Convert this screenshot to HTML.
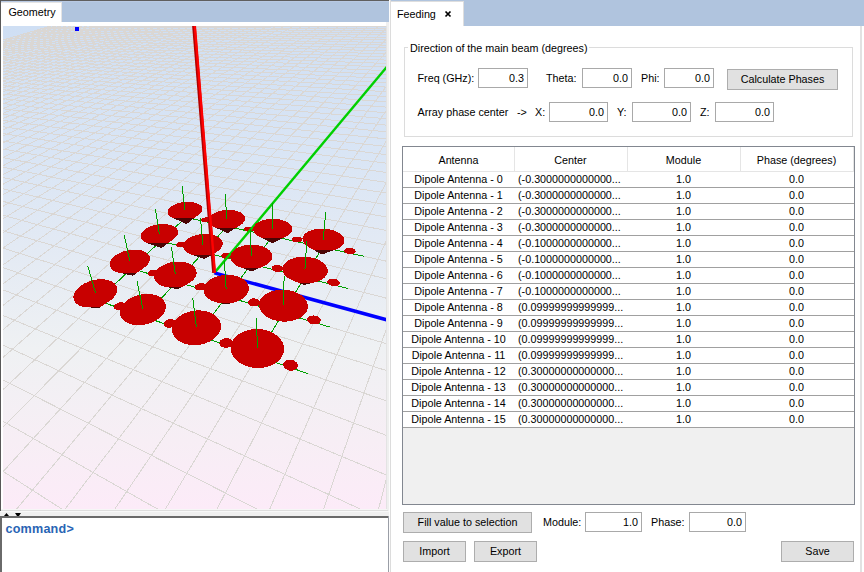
<!DOCTYPE html>
<html><head><meta charset="utf-8"><style>
html,body{margin:0;padding:0;width:864px;height:572px;overflow:hidden;background:#fff}
.b{position:absolute}
.t{position:absolute;font-family:"Liberation Sans", sans-serif;font-size:10.75px;line-height:13px;color:#000;white-space:pre}
</style></head><body>
<div class="b" style="left:0px;top:0px;width:389px;height:1px;background:#5f5f5f"></div>
<div class="b" style="left:1px;top:1px;width:388px;height:25px;background:#b0c4de"></div>
<div class="b" style="left:1px;top:1px;width:388px;height:1px;background:#b8c9e3"></div>
<div class="b" style="left:1px;top:2px;width:61px;height:20px;background:#e4e4e4"></div>
<div class="b" style="left:1px;top:3px;width:60px;height:19px;background:#ffffff"></div>
<div class="b" style="left:1px;top:22px;width:385px;height:4px;background:#ffffff"></div>
<div class="b" style="left:1px;top:26px;width:2px;height:483px;background:#ffffff"></div>
<div class="b" style="left:386px;top:22px;width:3px;height:494px;background:#efefef"></div>
<div class="b" style="left:386px;top:26px;width:1px;height:484px;background:#e3e3e3"></div>
<div class="b" style="left:0px;top:509px;width:389px;height:7px;background:#f0f0f0"></div>
<div class="b" style="left:1px;top:509px;width:386px;height:1px;background:#f6f6f6"></div>
<div class="b" style="left:0px;top:510px;width:388px;height:1px;background:#dedede"></div>
<div class="b" style="left:0px;top:511px;width:389px;height:1px;background:#f8f8f8"></div>
<div class="b" style="left:0px;top:0px;width:1px;height:511px;background:#585858"></div>
<div class="t" style="left:8.5px;top:6px;color:#000">Geometry</div>
<svg width="383" height="483" viewBox="3 26 383 483" style="position:absolute;left:3px;top:26px;display:block">
<defs><linearGradient id="bg" x1="0" y1="0" x2="0" y2="1"><stop offset="0" stop-color="#cfdff4"/><stop offset="0.26" stop-color="#d9e5f5"/><stop offset="0.46" stop-color="#e3eaf4"/><stop offset="0.67" stop-color="#eff1f3"/><stop offset="0.86" stop-color="#f7eef5"/><stop offset="1" stop-color="#fcebf8"/></linearGradient></defs>
<rect x="3" y="26" width="383" height="483" fill="url(#bg)"/>
<path d="M-4964.67 1498.96L82.30 16.73M-5308.28 1617.50L87.16 16.67M-5712.01 1756.79L92.07 16.62M-6193.16 1922.79L97.05 16.56M-6776.35 2123.99L102.09 16.51M-7497.91 2372.93L107.19 16.45M-8413.69 2688.88L112.36 16.39M-9614.32 3103.10L117.60 16.33M-11257.18 3669.89L122.91 16.27M-13641.74 4492.58L128.28 16.21M-17416.73 5794.96L133.73 16.15M-24298.75 8169.28L139.25 16.09M-40806.21 13864.42L144.84 16.02M-51424.45 17701.27L150.51 15.96M-50315.27 17572.27L156.26 15.90M-49206.10 17443.26L162.09 15.83M-48096.92 17314.26L167.99 15.77M-46987.74 17185.26L173.98 15.70M-45878.56 17056.25L180.05 15.63M-44769.39 16927.25L186.21 15.56M-43660.21 16798.25L192.46 15.49M-42551.03 16669.25L198.79 15.42M-41441.86 16540.24L205.22 15.35M-40332.68 16411.24L211.74 15.27M-39223.50 16282.24L218.35 15.20M-38114.32 16153.23L225.06 15.12M-37005.15 16024.23L231.87 15.05M-35895.97 15895.23L238.78 14.97M-34786.79 15766.22L245.80 14.89M-33677.62 15637.22L252.92 14.81M-32568.44 15508.22L260.16 14.73M-31459.26 15379.21L267.50 14.65M-30350.09 15250.21L274.96 14.56M-29240.91 15121.21L282.53 14.48M-28131.73 14992.20L290.23 14.39M-27022.55 14863.20L298.04 14.30M-25913.38 14734.20L305.98 14.22M-24804.20 14605.19L314.05 14.12M-23695.02 14476.19L322.25 14.03M-22585.85 14347.19L330.59 13.94M-21476.67 14218.19L339.06 13.84M-20367.49 14089.18L347.67 13.75M-19258.32 13960.18L356.43 13.65M-18149.14 13831.18L365.34 13.55M-17039.96 13702.17L374.40 13.45M-15930.78 13573.17L383.62 13.34M-14821.61 13444.17L392.99 13.24M-13712.43 13315.16L402.53 13.13M-12603.25 13186.16L412.24 13.02M-11494.08 13057.16L422.13 12.91M-10384.90 12928.15L432.19 12.80M-9275.72 12799.15L442.44 12.68M-8166.54 12670.15L452.87 12.57M-7057.37 12541.14L463.50 12.45M-5948.19 12412.14L474.32 12.33M-4839.01 12283.14L485.35 12.20M-3729.84 12154.14L496.59 12.08M-2620.66 12025.13L508.05 11.95M-1511.48 11896.13L519.73 11.82M-402.31 11767.13L531.64 11.68M706.87 11638.12L543.79 11.55M1816.05 11509.12L556.17 11.41M2925.23 11380.12L568.81 11.26M4034.40 11251.11L581.71 11.12M5143.58 11122.11L594.87 10.97M6252.76 10993.11L608.31 10.82M7361.93 10864.10L622.03 10.67M8471.11 10735.10L636.05 10.51M9580.29 10606.10L650.36 10.35M10689.47 10477.09L664.99 10.18M11798.64 10348.09L679.94 10.02M12907.82 10219.09L695.22 9.84M14017.00 10090.09L710.84 9.67M15126.17 9961.08L726.82 9.49M16235.35 9832.08L743.17 9.31M17344.53 9703.08L759.90 9.12M18453.70 9574.07L777.03 8.93M19562.88 9445.07L794.56 8.73M20672.06 9316.07L812.51 8.53M21781.24 9187.06L830.90 8.32M22890.41 9058.06L849.75 8.11M23999.59 8929.06L869.07 7.89M25108.77 8800.05L888.88 7.67M26217.94 8671.05L909.20 7.44M27327.12 8542.05L930.05 7.21M28436.30 8413.04L951.44 6.97M29545.47 8284.04L973.41 6.72M30654.65 8155.04L995.97 6.47M31763.83 8026.04L1019.15 6.21M32873.01 7897.03L1042.98 5.94M33982.18 7768.03L1067.48 5.66M35091.36 7639.03L1092.68 5.38M36200.54 7510.02L1118.61 5.09M37309.71 7381.02L1145.31 4.79M38418.89 7252.02L1172.80 4.48M39528.07 7123.01L1201.13 4.16M40637.25 6994.01L1230.33 3.84M41746.42 6865.01L1260.44 3.50M42855.60 6736.00L1291.52 3.15M43964.78 6607.00L1323.59 2.79M45073.95 6478.00L1356.72 2.42M-4964.67 1498.96L-52183.17 17789.51M-4419.88 1338.96L-50547.60 17599.29M-3973.17 1207.76L-48912.04 17409.06M-3600.26 1098.24L-47276.47 17218.84M-3284.24 1005.44L-45640.90 17028.61M-3013.03 925.78L-44005.34 16838.39M-2777.72 856.68L-42369.77 16648.16M-2571.62 796.15L-40734.20 16457.94M-2389.62 742.70L-39098.63 16267.71M-2227.73 695.15L-37463.07 16077.49M-2082.77 652.58L-35827.50 15887.26M-1952.24 614.24L-34191.93 15697.04M-1834.07 579.54L-32556.37 15506.81M-1726.60 547.98L-30920.80 15316.59M-1628.43 519.14L-29285.23 15126.36M-1538.40 492.70L-27649.67 14936.14M-1455.54 468.37L-26014.10 14745.91M-1379.03 445.90L-24378.53 14555.69M-1308.16 425.09L-22742.96 14365.46M-1242.34 405.76L-21107.40 14175.24M-1181.04 387.75L-19471.83 13985.01M-1123.81 370.95L-17836.26 13794.79M-1070.26 355.22L-16200.70 13604.56M-1020.05 340.47L-14565.13 13414.34M-972.87 326.62L-12929.56 13224.11M-928.46 313.57L-11294.00 13033.89M-886.57 301.27L-9658.43 12843.66M-847.01 289.65L-8022.86 12653.44M-809.58 278.66L-6387.29 12463.21M-774.11 268.24L-4751.73 12272.99M-740.46 258.36L-3116.16 12082.76M-708.49 248.97L-1480.59 11892.54M-678.07 240.04L154.97 11702.31M-649.09 231.53L1790.54 11512.09M-621.46 223.41L3426.11 11321.86M-595.09 215.67L5061.68 11131.64M-569.88 208.26L6697.24 10941.41M-545.76 201.18L8332.81 10751.19M-522.67 194.40L9968.38 10560.96M-500.54 187.90L11603.94 10370.74M-479.32 181.67L13239.51 10180.51M-458.93 175.68L14875.08 9990.29M-439.35 169.93L16510.64 9800.06M-420.52 164.40L18146.21 9609.84M-402.39 159.08L19781.78 9419.61M-384.94 153.95L21417.35 9229.39M-368.12 149.01L23052.91 9039.16M-351.90 144.25L24688.48 8848.94M-336.25 139.65L26324.05 8658.71M-321.13 135.21L27959.61 8468.49M-306.53 130.92L29595.18 8278.26M-292.42 126.78L31230.75 8088.04M-278.76 122.77L32866.31 7897.81M-265.55 118.89L34501.88 7707.59M-252.75 115.13L36137.45 7517.36M-240.35 111.49L37773.02 7327.14M-228.34 107.96L39408.58 7136.91M-216.69 104.54L41044.15 6946.68M-205.38 101.22L42679.72 6756.46M-194.41 97.99L44315.28 6566.23M-183.75 94.86L26588.98 3739.92M-173.40 91.82L15222.76 2056.31M-163.34 88.87L10762.70 1395.67M-153.56 86.00L8381.14 1042.90M-144.05 83.20L6899.71 823.47M-134.79 80.48L5889.20 673.79M-125.78 77.84L5155.86 565.16M-117.01 75.26L4599.41 482.74M-108.46 72.75L4162.73 418.05M-100.13 70.31L3810.91 365.94M-92.02 67.92L3521.41 323.06M-84.10 65.60L3279.01 287.15M-76.38 63.33L3073.09 256.65M-68.85 61.12L2895.98 230.42M-61.50 58.96L2742.04 207.62M-54.33 56.85L2607.00 187.61M-47.32 54.80L2487.57 169.92M-40.48 52.79L2381.21 154.17M-33.79 50.82L2285.87 140.05M-27.26 48.90L2199.93 127.32M-20.87 47.03L2122.06 115.78M-14.62 45.19L2051.17 105.28M-8.51 43.40L1986.38 95.68M-2.54 41.64L1926.92 86.88M3.31 39.93L1872.16 78.76M9.04 38.24L1821.56 71.27M14.64 36.60L1774.68 64.33M20.13 34.99L1731.11 57.87M25.50 33.41L1690.51 51.86M30.76 31.86L1652.59 46.24M35.92 30.35L1617.10 40.98M40.98 28.86L1583.81 36.05M45.93 27.41L1552.51 31.42M50.79 25.98L1523.04 27.05M55.55 24.58L1495.24 22.93M60.23 23.21L1468.98 19.04M64.81 21.86L1444.12 15.36M69.31 20.54L1420.56 11.87M73.72 19.25L1398.20 8.56M78.05 17.98L1376.95 5.41M82.30 16.73L1356.72 2.42" stroke="#dad7d4" stroke-width="1" fill="none" shape-rendering="crispEdges"/>
<path d="M97.60 300.50L307.78 373.57M131.48 268.58L329.93 327.05M160.55 241.18L348.25 288.58M185.78 217.40L363.65 256.22M97.60 300.50L199.38 204.58M144.51 316.81L239.65 212.66M197.33 335.17L283.73 221.50M257.26 356.01L332.17 231.22" stroke="#00a000" stroke-width="1" fill="none" shape-rendering="crispEdges"/>
<path d="M124.55 307.83L125.32 306.83L125.70 305.80L125.68 304.79L125.27 303.89L124.48 303.15L123.39 302.61L122.06 302.32L120.58 302.30L119.05 302.53L117.57 303.02L116.24 303.72L115.15 304.59L114.37 305.57L113.96 306.60L113.94 307.62L114.33 308.53L115.10 309.30L116.19 309.85L117.54 310.15L119.05 310.19L120.61 309.95L122.12 309.45L123.46 308.73ZM157.51 274.19L158.14 273.34L158.41 272.47L158.32 271.63L157.86 270.87L157.07 270.25L156.01 269.82L154.75 269.59L153.37 269.58L151.96 269.79L150.62 270.21L149.44 270.81L148.49 271.55L147.85 272.39L147.55 273.26L147.62 274.11L148.06 274.87L148.83 275.51L149.90 275.96L151.18 276.20L152.58 276.22L154.02 276.00L155.38 275.56L156.57 274.95ZM185.65 245.47L186.17 244.74L186.36 244.00L186.21 243.28L185.72 242.64L184.94 242.12L183.91 241.76L182.71 241.58L181.42 241.58L180.12 241.77L178.89 242.14L177.83 242.67L177.00 243.31L176.46 244.02L176.25 244.77L176.38 245.49L176.85 246.14L177.63 246.67L178.66 247.04L179.87 247.24L181.19 247.23L182.51 247.04L183.75 246.66L184.82 246.12ZM209.94 220.67L210.39 220.04L210.51 219.39L210.32 218.78L209.82 218.23L209.04 217.79L208.05 217.49L206.91 217.34L205.69 217.35L204.48 217.53L203.36 217.86L202.40 218.32L201.66 218.88L201.21 219.50L201.06 220.14L201.24 220.76L201.72 221.31L202.49 221.76L203.49 222.08L204.64 222.23L205.88 222.22L207.11 222.04L208.25 221.70L209.21 221.23ZM175.06 325.26L175.74 324.16L176.00 323.01L175.84 321.90L175.27 320.89L174.32 320.06L173.07 319.47L171.59 319.14L169.99 319.10L168.38 319.35L166.85 319.88L165.52 320.65L164.46 321.61L163.76 322.70L163.46 323.84L163.59 324.96L164.14 325.98L165.07 326.84L166.33 327.46L167.83 327.80L169.46 327.85L171.11 327.59L172.66 327.04L174.01 326.25ZM205.67 288.26L206.22 287.34L206.39 286.38L206.16 285.45L205.55 284.62L204.62 283.94L203.42 283.45L202.03 283.19L200.55 283.17L199.07 283.40L197.69 283.86L196.51 284.51L195.61 285.32L195.03 286.24L194.84 287.19L195.04 288.12L195.62 288.97L196.54 289.67L197.75 290.17L199.16 290.44L200.67 290.47L202.18 290.23L203.58 289.76L204.77 289.09ZM231.56 256.96L232.02 256.17L232.11 255.36L231.84 254.58L231.22 253.88L230.31 253.31L229.15 252.91L227.84 252.71L226.46 252.70L225.10 252.91L223.85 253.31L222.79 253.87L222.00 254.57L221.53 255.34L221.41 256.15L221.66 256.94L222.26 257.65L223.17 258.23L224.32 258.64L225.65 258.86L227.06 258.86L228.45 258.65L229.72 258.25L230.78 257.67ZM253.76 230.13L254.13 229.45L254.17 228.76L253.87 228.09L253.25 227.50L252.36 227.02L251.25 226.69L250.01 226.52L248.72 226.53L247.46 226.72L246.31 227.07L245.35 227.56L244.66 228.17L244.26 228.83L244.21 229.53L244.49 230.20L245.09 230.80L245.98 231.29L247.09 231.63L248.34 231.81L249.66 231.80L250.94 231.61L252.11 231.25L253.06 230.74ZM232.21 344.99L232.78 343.76L232.89 342.48L232.55 341.23L231.77 340.10L230.62 339.17L229.17 338.50L227.53 338.12L225.79 338.07L224.08 338.34L222.51 338.92L221.18 339.77L220.18 340.84L219.59 342.05L219.43 343.33L219.74 344.58L220.49 345.73L221.63 346.69L223.08 347.39L224.76 347.78L226.53 347.84L228.28 347.56L229.88 346.96L231.22 346.08ZM259.60 304.02L260.05 303.00L260.08 301.94L259.69 300.92L258.91 300.00L257.80 299.24L256.43 298.70L254.89 298.40L253.29 298.38L251.74 298.62L250.33 299.12L249.15 299.83L248.30 300.72L247.83 301.73L247.76 302.78L248.12 303.81L248.88 304.75L249.98 305.53L251.36 306.09L252.92 306.40L254.56 306.43L256.14 306.18L257.58 305.67L258.76 304.94ZM282.54 269.71L282.90 268.85L282.87 267.97L282.46 267.11L281.68 266.34L280.61 265.72L279.31 265.28L277.87 265.04L276.39 265.04L274.96 265.26L273.68 265.68L272.64 266.30L271.90 267.05L271.52 267.90L271.52 268.79L271.91 269.65L272.66 270.42L273.73 271.07L275.03 271.53L276.50 271.77L278.01 271.78L279.46 271.56L280.76 271.12L281.81 270.49ZM302.03 240.56L302.33 239.83L302.25 239.07L301.82 238.35L301.07 237.70L300.04 237.18L298.80 236.82L297.45 236.63L296.07 236.64L294.75 236.84L293.58 237.21L292.64 237.74L291.99 238.39L291.68 239.12L291.72 239.87L292.13 240.60L292.87 241.25L293.90 241.79L295.14 242.17L296.51 242.36L297.92 242.36L299.26 242.15L300.45 241.77L301.39 241.22ZM297.41 367.49L297.83 366.11L297.74 364.66L297.16 363.26L296.13 361.99L294.73 360.93L293.04 360.17L291.19 359.73L289.30 359.66L287.48 359.96L285.87 360.60L284.56 361.55L283.64 362.74L283.19 364.10L283.23 365.53L283.76 366.95L284.76 368.25L286.16 369.33L287.86 370.14L289.75 370.59L291.69 370.67L293.55 370.37L295.19 369.70L296.51 368.72ZM320.41 321.80L320.73 320.66L320.59 319.49L320.00 318.34L319.00 317.32L317.67 316.47L316.10 315.86L314.39 315.52L312.65 315.49L311.01 315.75L309.56 316.29L308.41 317.08L307.64 318.06L307.29 319.18L307.39 320.35L307.95 321.50L308.92 322.54L310.25 323.42L311.83 324.05L313.58 324.40L315.35 324.45L317.03 324.18L318.50 323.62L319.65 322.81ZM339.46 283.96L339.71 283.01L339.53 282.04L338.93 281.09L337.97 280.25L336.71 279.56L335.24 279.06L333.65 278.80L332.05 278.79L330.55 279.02L329.25 279.48L328.22 280.15L327.55 280.98L327.28 281.91L327.43 282.88L327.99 283.83L328.93 284.69L330.19 285.40L331.68 285.91L333.29 286.19L334.92 286.21L336.45 285.97L337.78 285.49L338.81 284.80ZM355.50 252.11L355.69 251.31L355.48 250.49L354.89 249.70L353.97 248.99L352.78 248.42L351.39 248.02L349.91 247.81L348.43 247.81L347.05 248.02L345.86 248.43L344.94 249.00L344.35 249.70L344.14 250.49L344.31 251.31L344.87 252.11L345.78 252.83L346.97 253.41L348.37 253.83L349.87 254.05L351.38 254.05L352.79 253.84L354.00 253.42L354.92 252.83Z" fill="#c80000" shape-rendering="crispEdges"/>
<path d="M214.38 272.86L445.07 -2.59" stroke="#00d000" stroke-width="2.4" fill="none"/>
<path d="M214.38 272.86L4019.67 1309.69" stroke="#0000ff" stroke-width="3.5" fill="none"/>
<path d="M167.58 212.53L167.59 211.77L167.72 211.01L167.99 210.25L168.38 209.49L168.90 208.74L169.53 208.00L170.27 207.29L171.12 206.60L172.08 205.95L173.12 205.33L174.25 204.75L175.45 204.21L176.72 203.72L178.05 203.28L179.43 202.89L180.85 202.56L182.29 202.29L183.76 202.08L185.23 201.93L186.71 201.84L188.17 201.82L189.61 201.85L191.01 201.95L192.38 202.12L193.69 202.34L194.94 202.63L196.12 202.97L197.23 203.38L198.24 203.83L199.16 204.34L199.98 204.89L200.69 205.49L201.28 206.13L201.75 206.80L202.10 207.50L202.32 208.23L202.41 208.98L202.36 209.75L202.18 210.52L201.87 211.29L201.43 212.07L200.85 212.83L200.15 213.58L199.33 214.31L186.56 224.03L172.20 217.67L171.20 217.17L170.31 216.62L169.54 216.02L168.89 215.38L168.37 214.71L167.97 214.00L167.71 213.28Z" fill="#c80000" shape-rendering="crispEdges"/>
<path d="M194.36 218.10L186.56 224.03L173.16 218.10Z" fill="#4a0404" shape-rendering="crispEdges"/>
<path d="M184.96 210.38L182.10 186.03" stroke="#00a000" stroke-width="1" fill="none" shape-rendering="crispEdges"/>
<path d="M208.39 220.60L208.42 219.78L208.59 218.95L208.89 218.13L209.33 217.33L209.89 216.54L210.58 215.77L211.38 215.04L212.30 214.33L213.32 213.67L214.43 213.05L215.63 212.47L216.91 211.95L218.26 211.48L219.66 211.07L221.12 210.72L222.62 210.43L224.14 210.21L225.69 210.05L227.24 209.96L228.79 209.94L230.33 209.99L231.84 210.10L233.32 210.28L234.75 210.53L236.13 210.84L237.44 211.22L238.67 211.65L239.82 212.15L240.88 212.70L241.84 213.30L242.68 213.94L243.41 214.63L244.02 215.36L244.50 216.12L244.85 216.91L245.06 217.72L245.13 218.54L245.06 219.38L244.84 220.21L244.49 221.05L244.00 221.87L243.37 222.68L242.61 223.46L241.72 224.21L240.71 224.93L227.47 233.26L214.18 226.99L213.04 226.44L212.01 225.84L211.10 225.19L210.32 224.50L209.66 223.77L209.13 223.01L208.75 222.23L208.50 221.42Z" fill="#c80000" shape-rendering="crispEdges"/>
<path d="M236.33 227.68L227.47 233.26L215.65 227.68Z" fill="#4a0404" shape-rendering="crispEdges"/>
<path d="M226.68 219.16L225.27 193.95" stroke="#00a000" stroke-width="1" fill="none" shape-rendering="crispEdges"/>
<path d="M140.75 236.24L140.83 235.36L141.05 234.48L141.41 233.59L141.90 232.72L142.52 231.85L143.26 231.01L144.12 230.19L145.09 229.41L146.16 228.66L147.33 227.95L148.58 227.29L149.91 226.69L151.30 226.13L152.75 225.64L154.25 225.21L155.78 224.84L157.34 224.54L158.91 224.31L160.48 224.15L162.05 224.06L163.60 224.05L165.11 224.10L166.59 224.23L168.02 224.44L169.39 224.71L170.69 225.05L171.91 225.46L173.04 225.94L174.08 226.47L175.01 227.07L175.82 227.72L176.52 228.42L177.09 229.16L177.53 229.94L177.84 230.76L178.00 231.61L178.03 232.48L177.91 233.37L177.65 234.26L177.25 235.16L176.70 236.05L176.03 236.93L175.21 237.79L174.28 238.63L173.22 239.43L161.65 248.02L147.49 243.25L146.26 242.79L145.13 242.26L144.12 241.66L143.23 241.01L142.47 240.31L141.85 239.56L141.36 238.77L141.02 237.95L140.81 237.11Z" fill="#c80000" shape-rendering="crispEdges"/>
<path d="M167.91 243.37L161.65 248.02L147.85 243.37Z" fill="#4a0404" shape-rendering="crispEdges"/>
<path d="M159.39 233.92L155.32 208.68" stroke="#00a000" stroke-width="1" fill="none" shape-rendering="crispEdges"/>
<path d="M253.16 229.42L253.21 228.52L253.40 227.64L253.74 226.77L254.22 225.91L254.83 225.09L255.57 224.29L256.44 223.54L257.42 222.82L258.51 222.16L259.70 221.54L260.98 220.98L262.35 220.48L263.78 220.04L265.28 219.67L266.83 219.36L268.43 219.12L270.05 218.96L271.69 218.87L273.34 218.85L274.99 218.91L276.62 219.03L278.22 219.24L279.79 219.51L281.31 219.85L282.77 220.26L284.16 220.74L285.47 221.28L286.69 221.87L287.81 222.53L288.82 223.23L289.71 223.98L290.48 224.77L291.11 225.59L291.61 226.45L291.97 227.33L292.18 228.22L292.24 229.12L292.15 230.03L291.91 230.93L291.51 231.82L290.97 232.70L290.29 233.54L289.46 234.36L288.49 235.13L287.40 235.86L286.19 236.53L272.37 243.39L259.15 236.66L257.95 236.01L256.87 235.30L255.92 234.55L255.11 233.75L254.43 232.92L253.89 232.07L253.50 231.20L253.25 230.31Z" fill="#c80000" shape-rendering="crispEdges"/>
<path d="M282.67 238.28L272.37 243.39L262.32 238.28Z" fill="#4a0404" shape-rendering="crispEdges"/>
<path d="M272.57 228.82L272.91 202.68" stroke="#00a000" stroke-width="1" fill="none" shape-rendering="crispEdges"/>
<path d="M302.47 239.09L302.53 238.13L302.75 237.18L303.12 236.26L303.64 235.36L304.30 234.50L305.10 233.68L306.03 232.91L307.09 232.19L308.26 231.53L309.54 230.92L310.92 230.39L312.38 229.92L313.92 229.52L315.53 229.19L317.20 228.94L318.91 228.77L320.65 228.68L322.41 228.67L324.18 228.73L325.95 228.88L327.70 229.10L329.43 229.40L331.11 229.78L332.75 230.23L334.32 230.76L335.81 231.35L337.22 232.00L338.53 232.71L339.73 233.48L340.82 234.30L341.78 235.16L342.60 236.06L343.28 236.99L343.82 237.95L344.20 238.92L344.42 239.90L344.48 240.89L344.37 241.87L344.10 242.84L343.67 243.79L343.08 244.71L342.33 245.59L341.43 246.43L340.38 247.22L339.19 247.95L337.88 248.62L336.45 249.21L321.87 254.56L308.80 247.26L307.52 246.48L306.38 245.66L305.37 244.79L304.50 243.88L303.79 242.95L303.22 242.00L302.81 241.03L302.56 240.06Z" fill="#c80000" shape-rendering="crispEdges"/>
<path d="M334.20 250.04L321.87 254.56L313.77 250.04Z" fill="#4a0404" shape-rendering="crispEdges"/>
<path d="M323.26 239.49L325.76 212.37" stroke="#00a000" stroke-width="1" fill="none" shape-rendering="crispEdges"/>
<path d="M183.34 246.05L183.44 245.09L183.70 244.13L184.09 243.18L184.63 242.25L185.30 241.34L186.10 240.45L187.02 239.60L188.05 238.80L189.19 238.03L190.43 237.32L191.76 236.67L193.16 236.07L194.64 235.54L196.17 235.08L197.75 234.69L199.36 234.37L201.00 234.13L202.66 233.96L204.32 233.87L205.97 233.86L207.60 233.93L209.19 234.08L210.75 234.30L212.25 234.61L213.69 234.98L215.06 235.43L216.33 235.95L217.52 236.54L218.60 237.19L219.57 237.89L220.42 238.66L221.14 239.47L221.73 240.32L222.18 241.21L222.49 242.13L222.65 243.08L222.66 244.04L222.51 245.01L222.22 245.99L221.78 246.96L221.18 247.91L220.45 248.85L219.57 249.75L218.56 250.62L217.42 251.45L216.17 252.23L204.33 259.12L191.61 254.68L190.22 254.17L188.94 253.58L187.77 252.93L186.73 252.22L185.81 251.45L185.04 250.63L184.40 249.77L183.91 248.87L183.57 247.95L183.38 247.01Z" fill="#c80000" shape-rendering="crispEdges"/>
<path d="M211.27 255.08L204.33 259.12L192.76 255.08Z" fill="#4a0404" shape-rendering="crispEdges"/>
<path d="M202.94 244.57L200.45 218.42" stroke="#00a000" stroke-width="1" fill="none" shape-rendering="crispEdges"/>
<path d="M109.75 264.63L109.78 263.61L109.96 262.58L110.29 261.55L110.76 260.52L111.38 259.49L112.13 258.49L113.01 257.51L114.01 256.57L115.13 255.66L116.35 254.79L117.66 253.98L119.06 253.22L120.54 252.53L122.08 251.90L123.67 251.34L125.30 250.85L126.97 250.43L128.65 250.10L130.35 249.85L132.03 249.68L133.71 249.59L135.36 249.59L136.97 249.68L138.52 249.85L140.02 250.10L141.45 250.43L142.80 250.85L144.06 251.34L145.21 251.90L146.26 252.54L147.19 253.25L147.99 254.01L148.67 254.84L149.20 255.72L149.59 256.64L149.84 257.60L149.93 258.59L149.87 259.61L149.66 260.65L149.29 261.70L148.78 262.75L148.11 263.79L147.30 264.81L146.35 265.82L145.26 266.79L144.05 267.72L132.99 275.62L119.06 272.80L117.58 272.41L116.21 271.93L114.94 271.37L113.80 270.73L112.78 270.02L111.90 269.24L111.17 268.41L110.59 267.52L110.15 266.59L109.87 265.62Z" fill="#c80000" shape-rendering="crispEdges"/>
<path d="M136.98 272.77L132.99 275.62L119.06 272.80L118.97 272.77Z" fill="#4a0404" shape-rendering="crispEdges"/>
<path d="M129.86 261.10L124.23 234.97" stroke="#00a000" stroke-width="1" fill="none" shape-rendering="crispEdges"/>
<path d="M230.37 256.85L230.50 255.80L230.77 254.76L231.20 253.75L231.78 252.75L232.50 251.79L233.35 250.87L234.34 250.00L235.44 249.17L236.66 248.40L237.97 247.69L239.39 247.05L240.88 246.48L242.45 245.99L244.08 245.57L245.76 245.23L247.47 244.97L249.22 244.79L250.98 244.70L252.74 244.70L254.50 244.78L256.23 244.95L257.93 245.20L259.59 245.54L261.19 245.95L262.72 246.45L264.18 247.02L265.54 247.66L266.80 248.37L267.95 249.15L268.98 249.98L269.89 250.87L270.66 251.80L271.28 252.78L271.76 253.79L272.08 254.82L272.25 255.87L272.25 256.93L272.09 258.00L271.77 259.05L271.29 260.10L270.65 261.12L269.85 262.10L268.91 263.05L267.82 263.95L266.60 264.80L265.25 265.58L263.78 266.29L251.49 271.40L239.04 266.80L237.58 266.15L236.22 265.43L234.99 264.65L233.89 263.80L232.93 262.90L232.12 261.96L231.46 260.98L230.95 259.97L230.60 258.94L230.41 257.90Z" fill="#c80000" shape-rendering="crispEdges"/>
<path d="M259.38 268.12L251.49 271.40L242.63 268.12Z" fill="#4a0404" shape-rendering="crispEdges"/>
<path d="M251.19 256.36L250.64 229.25" stroke="#00a000" stroke-width="1" fill="none" shape-rendering="crispEdges"/>
<path d="M154.17 276.77L154.21 275.64L154.42 274.51L154.79 273.38L155.30 272.26L155.97 271.17L156.77 270.10L157.71 269.07L158.77 268.08L159.96 267.14L161.25 266.26L162.64 265.44L164.12 264.68L165.67 264.00L167.30 263.39L168.98 262.87L170.70 262.42L172.45 262.07L174.23 261.80L176.01 261.62L177.79 261.54L179.55 261.54L181.29 261.64L182.98 261.83L184.62 262.12L186.20 262.49L187.71 262.95L189.12 263.49L190.44 264.12L191.66 264.82L192.76 265.59L193.73 266.44L194.58 267.34L195.28 268.30L195.84 269.32L196.24 270.37L196.49 271.46L196.58 272.58L196.50 273.72L196.27 274.86L195.87 276.01L195.31 277.15L194.59 278.27L193.71 279.37L192.69 280.44L191.53 281.45L190.24 282.42L188.82 283.33L187.29 284.16L177.52 289.10L167.16 287.25L165.44 286.91L163.79 286.47L162.24 285.94L160.80 285.32L159.49 284.61L158.30 283.82L157.25 282.96L156.34 282.04L155.59 281.07L154.99 280.04L154.55 278.98L154.28 277.89Z" fill="#c80000" shape-rendering="crispEdges"/>
<path d="M181.27 287.21L177.52 289.10L167.16 287.25L166.94 287.21Z" fill="#4a0404" shape-rendering="crispEdges"/>
<path d="M175.34 274.11L171.40 247.05" stroke="#00a000" stroke-width="1" fill="none" shape-rendering="crispEdges"/>
<path d="M282.57 268.78L282.70 267.65L283.00 266.53L283.46 265.45L284.07 264.40L284.84 263.39L285.75 262.44L286.80 261.54L287.98 260.70L289.28 259.93L290.69 259.24L292.21 258.62L293.81 258.09L295.49 257.63L297.23 257.27L299.04 256.99L300.88 256.81L302.76 256.72L304.65 256.73L306.55 256.82L308.44 257.01L310.31 257.30L312.15 257.67L313.94 258.13L315.67 258.68L317.33 259.31L318.90 260.03L320.38 260.81L321.75 261.67L323.00 262.58L324.12 263.56L325.11 264.59L325.95 265.66L326.63 266.76L327.15 267.90L327.51 269.05L327.70 270.22L327.71 271.39L327.54 272.55L327.20 273.69L326.68 274.81L325.99 275.89L325.14 276.93L324.12 277.92L322.94 278.84L321.62 279.70L320.16 280.47L318.58 281.17L316.88 281.77L315.09 282.27L303.88 285.03L293.57 280.91L291.89 280.19L290.31 279.39L288.85 278.52L287.53 277.59L286.35 276.59L285.32 275.55L284.45 274.47L283.74 273.36L283.19 272.23L282.81 271.08L282.61 269.93Z" fill="#c80000" shape-rendering="crispEdges"/>
<path d="M313.23 282.73L303.88 285.03L298.13 282.73Z" fill="#4a0404" shape-rendering="crispEdges"/>
<path d="M304.92 269.49L306.80 241.37" stroke="#00a000" stroke-width="1" fill="none" shape-rendering="crispEdges"/>
<path d="M73.47 296.77L73.62 295.56L73.93 294.34L74.41 293.12L75.04 291.90L75.82 290.69L76.74 289.51L77.79 288.36L78.98 287.26L80.27 286.19L81.67 285.19L83.17 284.24L84.75 283.36L86.41 282.56L88.12 281.83L89.89 281.18L91.69 280.63L93.51 280.16L95.35 279.78L97.18 279.51L99.01 279.33L100.80 279.25L102.56 279.26L104.27 279.38L105.92 279.60L107.49 279.91L108.98 280.32L110.38 280.83L111.67 281.43L112.84 282.11L113.89 282.88L114.81 283.72L115.59 284.64L116.22 285.62L116.70 286.67L117.02 287.76L117.18 288.91L117.17 290.09L117.00 291.30L116.66 292.53L116.15 293.77L115.49 295.01L114.66 296.24L113.68 297.45L112.55 298.63L111.28 299.78L109.88 300.87L108.36 301.91L99.66 307.73L87.70 307.42L85.88 307.26L84.14 306.99L82.49 306.62L80.95 306.13L79.53 305.54L78.24 304.86L77.08 304.08L76.08 303.22L75.23 302.29L74.54 301.28L74.02 300.22L73.67 299.11L73.48 297.95Z" fill="#c80000" shape-rendering="crispEdges"/>
<path d="M100.19 307.37L99.66 307.73L87.70 307.42L87.21 307.37Z" fill="#4a0404" shape-rendering="crispEdges"/>
<path d="M95.41 292.82L87.70 265.85" stroke="#00a000" stroke-width="1" fill="none" shape-rendering="crispEdges"/>
<path d="M203.63 290.22L203.68 288.98L203.91 287.73L204.29 286.51L204.84 285.30L205.55 284.13L206.40 283.00L207.40 281.92L208.53 280.89L209.78 279.93L211.15 279.03L212.62 278.21L214.19 277.47L215.85 276.81L217.57 276.24L219.35 275.76L221.18 275.38L223.05 275.10L224.94 274.91L226.83 274.82L228.73 274.84L230.61 274.96L232.46 275.18L234.26 275.49L236.02 275.91L237.70 276.42L239.31 277.02L240.83 277.72L242.25 278.50L243.55 279.35L244.73 280.29L245.78 281.29L246.69 282.35L247.45 283.47L248.05 284.63L248.48 285.83L248.76 287.06L248.85 288.32L248.78 289.58L248.53 290.84L248.11 292.10L247.51 293.34L246.74 294.55L245.81 295.72L244.72 296.84L243.47 297.90L242.09 298.89L240.57 299.81L238.93 300.64L237.19 301.38L235.36 302.02L233.45 302.56L227.11 304.11L221.31 303.39L219.34 303.12L217.42 302.73L215.58 302.24L213.83 301.64L212.19 300.94L210.66 300.15L209.26 299.28L207.99 298.32L206.88 297.30L205.92 296.22L205.13 295.08L204.50 293.91L204.04 292.70L203.75 291.47Z" fill="#c80000" shape-rendering="crispEdges"/>
<path d="M229.91 303.42L227.11 304.11L221.59 303.42Z" fill="#4a0404" shape-rendering="crispEdges"/>
<path d="M226.13 288.65L224.35 260.61" stroke="#00a000" stroke-width="1" fill="none" shape-rendering="crispEdges"/>
<path d="M119.77 311.81L119.94 310.46L120.29 309.10L120.80 307.76L121.47 306.43L122.30 305.13L123.28 303.87L124.40 302.65L125.65 301.48L127.02 300.38L128.49 299.34L130.07 298.38L131.74 297.50L133.48 296.70L135.29 296.00L137.14 295.40L139.04 294.89L140.96 294.49L142.89 294.19L144.82 294.00L146.74 293.92L148.63 293.95L150.48 294.09L152.28 294.34L154.02 294.69L155.68 295.15L157.25 295.72L158.72 296.38L160.08 297.14L161.32 298.00L162.43 298.93L163.40 299.95L164.22 301.04L164.88 302.20L165.38 303.42L165.72 304.68L165.88 305.99L165.87 307.33L165.68 308.69L165.32 310.06L164.78 311.43L164.06 312.79L163.18 314.13L162.13 315.43L160.93 316.70L159.57 317.91L158.08 319.05L156.47 320.12L154.73 321.11L152.90 322.00L150.98 322.80L148.99 323.48L146.95 324.05L144.88 324.50L142.79 324.83L140.69 325.03L138.62 325.11L136.58 325.05L134.59 324.87L132.68 324.56L130.85 324.13L129.12 323.58L127.50 322.92L126.01 322.15L124.67 321.28L123.47 320.32L122.43 319.28L121.55 318.16L120.84 316.98L120.31 315.74L119.95 314.46L119.77 313.15Z" fill="#c80000" shape-rendering="crispEdges"/>
<path d="M142.84 308.90L136.96 281.01" stroke="#00a000" stroke-width="1" fill="none" shape-rendering="crispEdges"/>
<path d="M213.98 272.86L-1388.05 -19467.11" stroke="#b00000" stroke-width="3.6" fill="none"/>
<path d="M214.88 272.86L-1387.15 -19467.11" stroke="#ff0000" stroke-width="2.4" fill="none"/>
<path d="M259.02 305.23L259.06 303.85L259.29 302.50L259.69 301.17L260.26 299.87L261.00 298.63L261.90 297.44L262.96 296.31L264.16 295.25L265.49 294.26L266.95 293.36L268.52 292.55L270.20 291.83L271.96 291.21L273.81 290.69L275.72 290.28L277.69 289.98L279.69 289.78L281.73 289.70L283.77 289.72L285.82 289.86L287.85 290.11L289.85 290.47L291.81 290.94L293.72 291.51L295.55 292.19L297.31 292.96L298.97 293.83L300.52 294.79L301.95 295.82L303.25 296.94L304.41 298.12L305.41 299.36L306.26 300.65L306.93 301.99L307.43 303.35L307.75 304.74L307.88 306.14L307.82 307.55L307.58 308.94L307.14 310.31L306.51 311.65L305.69 312.94L304.70 314.18L303.53 315.36L302.19 316.46L300.70 317.47L299.07 318.39L297.30 319.20L295.42 319.91L293.44 320.49L291.37 320.96L289.24 321.30L287.06 321.51L284.85 321.58L282.63 321.53L280.42 321.35L278.24 321.03L276.10 320.59L274.03 320.03L272.04 319.36L270.14 318.57L268.36 317.68L266.70 316.70L265.18 315.63L263.81 314.49L262.60 313.28L261.56 312.01L260.69 310.70L260.00 309.36L259.49 307.99L259.16 306.61Z" fill="#c80000" shape-rendering="crispEdges"/>
<path d="M283.23 304.99L284.20 275.95" stroke="#00a000" stroke-width="1" fill="none" shape-rendering="crispEdges"/>
<path d="M171.82 328.63L171.99 327.13L172.35 325.63L172.89 324.16L173.59 322.71L174.47 321.31L175.50 319.96L176.67 318.67L177.99 317.45L179.43 316.31L180.99 315.25L182.66 314.28L184.43 313.41L186.27 312.64L188.18 311.98L190.15 311.43L192.16 310.99L194.20 310.67L196.26 310.48L198.32 310.40L200.36 310.44L202.38 310.60L204.36 310.89L206.29 311.29L208.15 311.81L209.93 312.45L211.62 313.20L213.20 314.05L214.67 315.00L216.01 316.05L217.21 317.19L218.27 318.41L219.16 319.70L219.89 321.05L220.45 322.46L220.82 323.92L221.02 325.41L221.02 326.93L220.84 328.45L220.46 329.98L219.90 331.49L219.15 332.98L218.21 334.44L217.10 335.84L215.82 337.19L214.38 338.46L212.79 339.65L211.06 340.74L209.21 341.73L207.25 342.61L205.20 343.36L203.08 343.99L200.89 344.48L198.67 344.84L196.43 345.05L194.19 345.12L191.98 345.05L189.80 344.83L187.67 344.47L185.63 343.98L183.67 343.35L181.82 342.60L180.10 341.73L178.51 340.75L177.07 339.67L175.79 338.49L174.68 337.24L173.74 335.91L172.98 334.53L172.41 333.10L172.03 331.63L171.83 330.14Z" fill="#c80000" shape-rendering="crispEdges"/>
<path d="M196.34 327.03L192.84 298.20" stroke="#00a000" stroke-width="1" fill="none" shape-rendering="crispEdges"/>
<path d="M230.72 347.59L230.87 345.92L231.23 344.27L231.77 342.65L232.50 341.09L233.40 339.58L234.48 338.15L235.71 336.79L237.10 335.52L238.63 334.35L240.28 333.27L242.06 332.31L243.93 331.46L245.90 330.74L247.95 330.13L250.06 329.66L252.22 329.31L254.42 329.10L256.64 329.03L258.86 329.09L261.08 329.28L263.27 329.61L265.42 330.08L267.52 330.67L269.56 331.39L271.51 332.23L273.37 333.20L275.12 334.27L276.75 335.45L278.24 336.73L279.58 338.10L280.76 339.56L281.78 341.08L282.62 342.66L283.27 344.30L283.72 345.98L283.98 347.68L284.03 349.39L283.87 351.10L283.51 352.80L282.94 354.48L282.16 356.11L281.18 357.68L280.01 359.19L278.65 360.61L277.11 361.94L275.40 363.16L273.55 364.27L271.55 365.24L269.44 366.08L267.22 366.78L264.93 367.32L262.56 367.70L260.15 367.93L257.72 367.99L255.29 367.90L252.88 367.64L250.51 367.22L248.20 366.65L245.97 365.93L243.84 365.07L241.82 364.07L239.94 362.96L238.20 361.73L236.63 360.40L235.22 358.98L233.99 357.48L232.95 355.91L232.10 354.30L231.46 352.65L231.01 350.97L230.76 349.28Z" fill="#c80000" shape-rendering="crispEdges"/>
<path d="M257.16 347.63L256.78 317.87" stroke="#00a000" stroke-width="1" fill="none" shape-rendering="crispEdges"/>
<rect x="75" y="27" width="4" height="4" fill="#0000ff"/>
</svg>
<svg style="position:absolute;left:0;top:510px" width="30" height="8"><path d="M4 6L6.5 3L9 6Z" fill="#000"/><path d="M15 3L21 3L19 6L17 6Z" fill="#000"/></svg>
<div class="b" style="left:0px;top:516px;width:389px;height:56px;background:#fff"></div>
<div class="b" style="left:0px;top:516px;width:389px;height:2px;background:#6a6a6a"></div>
<div class="b" style="left:0px;top:516px;width:2px;height:56px;background:#6a6a6a"></div>
<div class="b" style="left:388px;top:516px;width:2px;height:56px;background:#9a9ea6"></div>
<div class="t" style="left:5.5px;top:521.6px;font-size:12.6px;font-weight:bold;color:#2964b4;line-height:15px;letter-spacing:0.2px">command&gt;</div>
<div class="b" style="left:389px;top:0px;width:2px;height:572px;background:#f4f4f4"></div>
<div class="b" style="left:390px;top:26px;width:1px;height:546px;background:#d4d4d4"></div>
<div class="b" style="left:391px;top:0px;width:473px;height:572px;background:#fff"></div>
<div class="b" style="left:391px;top:0px;width:473px;height:26px;background:#b0c4de"></div>
<div class="b" style="left:391px;top:1px;width:73px;height:25px;background:#dedede"></div>
<div class="b" style="left:391px;top:2px;width:72px;height:24px;background:#fff"></div>
<div class="b" style="left:389px;top:0px;width:1px;height:572px;background:#fcfcfc"></div>
<div class="b" style="left:390px;top:0px;width:1px;height:572px;background:#dcdcdc"></div>
<div class="b" style="left:860px;top:26px;width:2px;height:546px;background:#e2e2e2"></div>
<div class="t" style="left:397px;top:8px;">Feeding</div>
<svg style="position:absolute;left:444px;top:10px" width="9" height="9"><path d="M1.5 1.5L6.5 6.5M6.5 1.5L1.5 6.5" stroke="#000" stroke-width="1.7"/></svg>
<div class="b" style="left:404px;top:47px;width:449px;height:90px;border:1px solid #dcdcdc;box-sizing:border-box"></div>
<div class="t" style="left:408px;top:42px;background:#fff;padding:0 2px">Direction of the main beam (degrees)</div>
<div class="t" style="left:417.5px;top:72px;">Freq (GHz):</div>
<div class="b" style="left:478px;top:68px;width:50px;height:20px;border:1px solid #a9a9a9;box-sizing:border-box;background:#fff"></div><div class="t" style="right:340px;top:72px;">0.3</div>
<div class="t" style="left:546px;top:72px;">Theta:</div>
<div class="b" style="left:582px;top:68px;width:50px;height:20px;border:1px solid #a9a9a9;box-sizing:border-box;background:#fff"></div><div class="t" style="right:236px;top:72px;">0.0</div>
<div class="t" style="left:641px;top:72px;">Phi:</div>
<div class="b" style="left:664px;top:68px;width:50px;height:20px;border:1px solid #a9a9a9;box-sizing:border-box;background:#fff"></div><div class="t" style="right:154px;top:72px;">0.0</div>
<div class="b" style="left:727px;top:69px;width:111px;height:21px;border:1px solid #adadad;box-sizing:border-box;background:#e1e1e1"></div><div class="t" style="left:727px;width:111px;text-align:center;top:73px;">Calculate Phases</div>
<div class="t" style="left:417.5px;top:106px;">Array phase center</div>
<div class="t" style="left:517px;top:106px;">-&gt;</div>
<div class="t" style="left:535px;top:106px;">X:</div>
<div class="b" style="left:549px;top:102px;width:59px;height:20px;border:1px solid #a9a9a9;box-sizing:border-box;background:#fff"></div><div class="t" style="right:260px;top:106px;">0.0</div>
<div class="t" style="left:617px;top:106px;">Y:</div>
<div class="b" style="left:632px;top:102px;width:59px;height:20px;border:1px solid #a9a9a9;box-sizing:border-box;background:#fff"></div><div class="t" style="right:177px;top:106px;">0.0</div>
<div class="t" style="left:700px;top:106px;">Z:</div>
<div class="b" style="left:715px;top:102px;width:59px;height:20px;border:1px solid #a9a9a9;box-sizing:border-box;background:#fff"></div><div class="t" style="right:94px;top:106px;">0.0</div>
<div class="b" style="left:402px;top:146px;width:453px;height:359px;border:1px solid #828790;box-sizing:border-box;background:#f0f0f0"></div>
<div class="b" style="left:403px;top:147px;width:451px;height:25px;background:#fff"></div>
<div class="b" style="left:403px;top:171px;width:451px;height:1px;background:#e5e5e5"></div>
<div class="b" style="left:514px;top:147px;width:1px;height:24px;background:#e5e5e5"></div>
<div class="b" style="left:627px;top:147px;width:1px;height:24px;background:#e5e5e5"></div>
<div class="b" style="left:740px;top:147px;width:1px;height:24px;background:#e5e5e5"></div>
<div class="b" style="left:853px;top:147px;width:1px;height:24px;background:#e5e5e5"></div>
<div class="t" style="left:403px;width:111px;text-align:center;top:154px;">Antenna</div>
<div class="t" style="left:514px;width:113px;text-align:center;top:154px;">Center</div>
<div class="t" style="left:627px;width:113px;text-align:center;top:154px;">Module</div>
<div class="t" style="left:740px;width:113px;text-align:center;top:154px;">Phase (degrees)</div>
<div class="b" style="left:403px;top:172px;width:451px;height:15px;background:#fff"></div>
<div class="b" style="left:403px;top:187px;width:451px;height:1px;background:#a0a0a0"></div>
<div class="t" style="left:403px;width:111px;text-align:center;top:173px;">Dipole Antenna - 0</div>
<div class="t" style="left:518px;top:173px;">(-0.3000000000000...</div>
<div class="t" style="left:627px;width:113px;text-align:center;top:173px;">1.0</div>
<div class="t" style="left:740px;width:113px;text-align:center;top:173px;">0.0</div>
<div class="b" style="left:403px;top:188px;width:451px;height:15px;background:#fff"></div>
<div class="b" style="left:403px;top:203px;width:451px;height:1px;background:#a0a0a0"></div>
<div class="t" style="left:403px;width:111px;text-align:center;top:189px;">Dipole Antenna - 1</div>
<div class="t" style="left:518px;top:189px;">(-0.3000000000000...</div>
<div class="t" style="left:627px;width:113px;text-align:center;top:189px;">1.0</div>
<div class="t" style="left:740px;width:113px;text-align:center;top:189px;">0.0</div>
<div class="b" style="left:403px;top:204px;width:451px;height:15px;background:#fff"></div>
<div class="b" style="left:403px;top:219px;width:451px;height:1px;background:#a0a0a0"></div>
<div class="t" style="left:403px;width:111px;text-align:center;top:205px;">Dipole Antenna - 2</div>
<div class="t" style="left:518px;top:205px;">(-0.3000000000000...</div>
<div class="t" style="left:627px;width:113px;text-align:center;top:205px;">1.0</div>
<div class="t" style="left:740px;width:113px;text-align:center;top:205px;">0.0</div>
<div class="b" style="left:403px;top:220px;width:451px;height:15px;background:#fff"></div>
<div class="b" style="left:403px;top:235px;width:451px;height:1px;background:#a0a0a0"></div>
<div class="t" style="left:403px;width:111px;text-align:center;top:221px;">Dipole Antenna - 3</div>
<div class="t" style="left:518px;top:221px;">(-0.3000000000000...</div>
<div class="t" style="left:627px;width:113px;text-align:center;top:221px;">1.0</div>
<div class="t" style="left:740px;width:113px;text-align:center;top:221px;">0.0</div>
<div class="b" style="left:403px;top:236px;width:451px;height:15px;background:#fff"></div>
<div class="b" style="left:403px;top:251px;width:451px;height:1px;background:#a0a0a0"></div>
<div class="t" style="left:403px;width:111px;text-align:center;top:237px;">Dipole Antenna - 4</div>
<div class="t" style="left:518px;top:237px;">(-0.1000000000000...</div>
<div class="t" style="left:627px;width:113px;text-align:center;top:237px;">1.0</div>
<div class="t" style="left:740px;width:113px;text-align:center;top:237px;">0.0</div>
<div class="b" style="left:403px;top:252px;width:451px;height:15px;background:#fff"></div>
<div class="b" style="left:403px;top:267px;width:451px;height:1px;background:#a0a0a0"></div>
<div class="t" style="left:403px;width:111px;text-align:center;top:253px;">Dipole Antenna - 5</div>
<div class="t" style="left:518px;top:253px;">(-0.1000000000000...</div>
<div class="t" style="left:627px;width:113px;text-align:center;top:253px;">1.0</div>
<div class="t" style="left:740px;width:113px;text-align:center;top:253px;">0.0</div>
<div class="b" style="left:403px;top:268px;width:451px;height:15px;background:#fff"></div>
<div class="b" style="left:403px;top:283px;width:451px;height:1px;background:#a0a0a0"></div>
<div class="t" style="left:403px;width:111px;text-align:center;top:269px;">Dipole Antenna - 6</div>
<div class="t" style="left:518px;top:269px;">(-0.1000000000000...</div>
<div class="t" style="left:627px;width:113px;text-align:center;top:269px;">1.0</div>
<div class="t" style="left:740px;width:113px;text-align:center;top:269px;">0.0</div>
<div class="b" style="left:403px;top:284px;width:451px;height:15px;background:#fff"></div>
<div class="b" style="left:403px;top:299px;width:451px;height:1px;background:#a0a0a0"></div>
<div class="t" style="left:403px;width:111px;text-align:center;top:285px;">Dipole Antenna - 7</div>
<div class="t" style="left:518px;top:285px;">(-0.1000000000000...</div>
<div class="t" style="left:627px;width:113px;text-align:center;top:285px;">1.0</div>
<div class="t" style="left:740px;width:113px;text-align:center;top:285px;">0.0</div>
<div class="b" style="left:403px;top:300px;width:451px;height:15px;background:#fff"></div>
<div class="b" style="left:403px;top:315px;width:451px;height:1px;background:#a0a0a0"></div>
<div class="t" style="left:403px;width:111px;text-align:center;top:301px;">Dipole Antenna - 8</div>
<div class="t" style="left:518px;top:301px;">(0.09999999999999...</div>
<div class="t" style="left:627px;width:113px;text-align:center;top:301px;">1.0</div>
<div class="t" style="left:740px;width:113px;text-align:center;top:301px;">0.0</div>
<div class="b" style="left:403px;top:316px;width:451px;height:15px;background:#fff"></div>
<div class="b" style="left:403px;top:331px;width:451px;height:1px;background:#a0a0a0"></div>
<div class="t" style="left:403px;width:111px;text-align:center;top:317px;">Dipole Antenna - 9</div>
<div class="t" style="left:518px;top:317px;">(0.09999999999999...</div>
<div class="t" style="left:627px;width:113px;text-align:center;top:317px;">1.0</div>
<div class="t" style="left:740px;width:113px;text-align:center;top:317px;">0.0</div>
<div class="b" style="left:403px;top:332px;width:451px;height:15px;background:#fff"></div>
<div class="b" style="left:403px;top:347px;width:451px;height:1px;background:#a0a0a0"></div>
<div class="t" style="left:403px;width:111px;text-align:center;top:333px;">Dipole Antenna - 10</div>
<div class="t" style="left:518px;top:333px;">(0.09999999999999...</div>
<div class="t" style="left:627px;width:113px;text-align:center;top:333px;">1.0</div>
<div class="t" style="left:740px;width:113px;text-align:center;top:333px;">0.0</div>
<div class="b" style="left:403px;top:348px;width:451px;height:15px;background:#fff"></div>
<div class="b" style="left:403px;top:363px;width:451px;height:1px;background:#a0a0a0"></div>
<div class="t" style="left:403px;width:111px;text-align:center;top:349px;">Dipole Antenna - 11</div>
<div class="t" style="left:518px;top:349px;">(0.09999999999999...</div>
<div class="t" style="left:627px;width:113px;text-align:center;top:349px;">1.0</div>
<div class="t" style="left:740px;width:113px;text-align:center;top:349px;">0.0</div>
<div class="b" style="left:403px;top:364px;width:451px;height:15px;background:#fff"></div>
<div class="b" style="left:403px;top:379px;width:451px;height:1px;background:#a0a0a0"></div>
<div class="t" style="left:403px;width:111px;text-align:center;top:365px;">Dipole Antenna - 12</div>
<div class="t" style="left:518px;top:365px;">(0.30000000000000...</div>
<div class="t" style="left:627px;width:113px;text-align:center;top:365px;">1.0</div>
<div class="t" style="left:740px;width:113px;text-align:center;top:365px;">0.0</div>
<div class="b" style="left:403px;top:380px;width:451px;height:15px;background:#fff"></div>
<div class="b" style="left:403px;top:395px;width:451px;height:1px;background:#a0a0a0"></div>
<div class="t" style="left:403px;width:111px;text-align:center;top:381px;">Dipole Antenna - 13</div>
<div class="t" style="left:518px;top:381px;">(0.30000000000000...</div>
<div class="t" style="left:627px;width:113px;text-align:center;top:381px;">1.0</div>
<div class="t" style="left:740px;width:113px;text-align:center;top:381px;">0.0</div>
<div class="b" style="left:403px;top:396px;width:451px;height:15px;background:#fff"></div>
<div class="b" style="left:403px;top:411px;width:451px;height:1px;background:#a0a0a0"></div>
<div class="t" style="left:403px;width:111px;text-align:center;top:397px;">Dipole Antenna - 14</div>
<div class="t" style="left:518px;top:397px;">(0.30000000000000...</div>
<div class="t" style="left:627px;width:113px;text-align:center;top:397px;">1.0</div>
<div class="t" style="left:740px;width:113px;text-align:center;top:397px;">0.0</div>
<div class="b" style="left:403px;top:412px;width:451px;height:15px;background:#fff"></div>
<div class="b" style="left:403px;top:427px;width:451px;height:1px;background:#a0a0a0"></div>
<div class="t" style="left:403px;width:111px;text-align:center;top:413px;">Dipole Antenna - 15</div>
<div class="t" style="left:518px;top:413px;">(0.30000000000000...</div>
<div class="t" style="left:627px;width:113px;text-align:center;top:413px;">1.0</div>
<div class="t" style="left:740px;width:113px;text-align:center;top:413px;">0.0</div>
<div class="b" style="left:403px;top:512px;width:129px;height:21px;border:1px solid #adadad;box-sizing:border-box;background:#e1e1e1"></div><div class="t" style="left:403px;width:129px;text-align:center;top:516px;">Fill value to selection</div>
<div class="t" style="left:543px;top:516px;">Module:</div>
<div class="b" style="left:585px;top:512px;width:57px;height:20px;border:1px solid #a9a9a9;box-sizing:border-box;background:#fff"></div><div class="t" style="right:226px;top:516px;">1.0</div>
<div class="t" style="left:651px;top:516px;">Phase:</div>
<div class="b" style="left:689px;top:512px;width:57px;height:20px;border:1px solid #a9a9a9;box-sizing:border-box;background:#fff"></div><div class="t" style="right:122px;top:516px;">0.0</div>
<div class="b" style="left:403px;top:541px;width:63px;height:21px;border:1px solid #adadad;box-sizing:border-box;background:#e1e1e1"></div><div class="t" style="left:403px;width:63px;text-align:center;top:545px;">Import</div>
<div class="b" style="left:474px;top:541px;width:63px;height:21px;border:1px solid #adadad;box-sizing:border-box;background:#e1e1e1"></div><div class="t" style="left:474px;width:63px;text-align:center;top:545px;">Export</div>
<div class="b" style="left:781px;top:541px;width:73px;height:21px;border:1px solid #adadad;box-sizing:border-box;background:#e1e1e1"></div><div class="t" style="left:781px;width:73px;text-align:center;top:545px;">Save</div>
</body></html>
